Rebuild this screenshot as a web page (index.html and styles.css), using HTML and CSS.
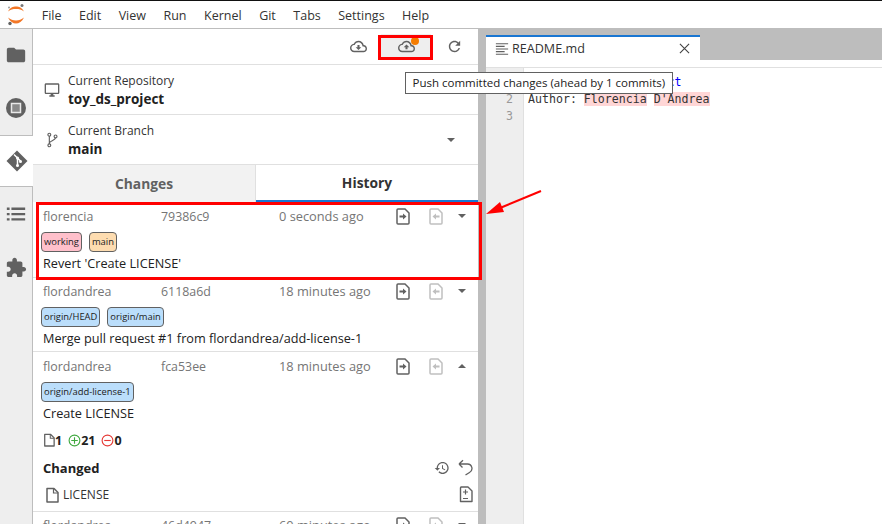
FILE: index.html
```html
<!DOCTYPE html>
<html lang="en">
<head>
<meta charset="utf-8">
<title>JupyterLab</title>
<link rel="stylesheet" href="styles.css">
</head>
<body>
<svg width="0" height="0" class="defs">
	<defs>
		<symbol id="i-file-in" viewBox="0 0 14 17"><path d="M2 1h7l4 4v10a1 1 0 0 1-1 1h-10a1 1 0 0 1-1-1v-13a1 1 0 0 1 1-1z" fill="none" stroke="currentColor" stroke-width="1.500"/><path d="M3.500 7.500h3.500v-2l3.500 3-3.500 3v-2h-3.500z" fill="currentColor"/></symbol>
		<symbol id="i-file-out" viewBox="0 0 14 17"><path d="M2 1h7l4 4v10a1 1 0 0 1-1 1h-10a1 1 0 0 1-1-1v-13a1 1 0 0 1 1-1z" fill="none" stroke="currentColor" stroke-width="1.500"/><path d="M10.500 7.500h-3.500v-2l-3.500 3 3.500 3v-2h3.500z" fill="currentColor"/></symbol>
		<symbol id="i-file-plain" viewBox="0 0 14 16"><path d="M2 1.500h7l4 4v9.500h-11z" fill="none" stroke="currentColor" stroke-width="1.500" stroke-linejoin="round"/><path d="M8.500 1.500v4.500h4.500" fill="none" stroke="currentColor" stroke-width="1.200"/></symbol>
		<symbol id="i-up" viewBox="0 0 24 24"><path fill="currentColor" d="M19.350 10.040C18.670 6.590 15.640 4 12 4 9.110 4 6.600 5.640 5.350 8.040 2.340 8.360 0 10.910 0 14c0 3.310 2.690 6 6 6h13c2.760 0 5-2.240 5-5 0-2.640-2.050-4.780-4.650-4.960zM19 18H6c-2.210 0-4-1.790-4-4 0-2.050 1.530-3.760 3.560-3.970l1.070-.11.500-.950C8.080 7.140 9.940 6 12 6c2.620 0 4.880 1.860 5.390 4.430l.300 1.500 1.530.110c1.560.100 2.780 1.410 2.780 2.960 0 1.650-1.350 3-3 3zM8 13h2.550v3h2.900v-3H16l-4-4z"/></symbol>
		<symbol id="i-down" viewBox="0 0 24 24"><path fill="currentColor" d="M19.350 10.040C18.670 6.590 15.640 4 12 4 9.110 4 6.600 5.640 5.350 8.040 2.340 8.360 0 10.910 0 14c0 3.310 2.690 6 6 6h13c2.760 0 5-2.240 5-5 0-2.640-2.050-4.780-4.650-4.960zM19 18H6c-2.210 0-4-1.790-4-4 0-2.050 1.530-3.760 3.560-3.970l1.070-.11.500-.950C8.080 7.140 9.940 6 12 6c2.620 0 4.880 1.860 5.390 4.430l.300 1.500 1.530.110c1.560.100 2.780 1.410 2.780 2.960 0 1.650-1.350 3-3 3zM16 13h-2.550v-3h-2.900v3H8l4 4z"/></symbol>
	</defs>
</svg>

<header class="menubar">
	<svg class="logo" viewBox="0 0 24 26" width="24" height="26">
		<path d="M3 9.500C5 5.500 8 4.500 11 4.500s6 1 8 5C16.500 7.500 14 7 11 7S5.500 7.500 3 9.500z" fill="#f37726"/>
		<path d="M3 15.500C5 19.500 8 21.500 11 21.500s6-2 8-6C16.500 17.500 14 18.500 11 18.500S5.500 17.500 3 15.500z" fill="#f37726"/>
		<circle cx="17" cy="3.500" r="1.500" fill="#767677"/>
		<circle cx="4" cy="5.500" r="1" fill="#9e9e9e"/>
		<circle cx="5" cy="21.500" r="1.700" fill="#616262"/>
	</svg>
	<nav class="menu">
		<span>File</span><span>Edit</span><span>View</span><span>Run</span><span>Kernel</span><span>Git</span><span>Tabs</span><span>Settings</span><span>Help</span>
	</nav>
</header>

<main class="shell">
	<aside class="sidebar">
		<div class="side-tab">
			<svg viewBox="0 0 24 24" width="22" height="22"><path fill="currentColor" d="M10 4H4c-1.100 0-1.990.900-1.990 2L2 18c0 1.100.900 2 2 2h16c1.100 0 2-.900 2-2V8c0-1.100-.900-2-2-2h-8l-2-2z"/></svg>
		</div>
		<div class="side-tab">
			<svg viewBox="0 0 24 24" width="24" height="24"><circle cx="12" cy="12" r="10" fill="currentColor"/><rect x="7.500" y="7.500" width="9" height="9" fill="#8a8a8a" stroke="#e8e8e8" stroke-width="1.500"/></svg>
		</div>
		<div class="side-tab side-tab-on">
			<svg viewBox="0 0 24 24" width="24" height="24"><path fill="currentColor" d="M12 1.500l10.500 10.500-10.500 10.500-10.500-10.500z"/><path d="M9 5.500l3.500 3.500m0 0v8m0-8l3.500 3.500" stroke="#fff" stroke-width="1.500" fill="none"/><circle cx="12.500" cy="9" r="1.500" fill="#fff"/><circle cx="12.500" cy="16.500" r="1.500" fill="#fff"/><circle cx="15.500" cy="12.500" r="1.500" fill="#fff"/></svg>
		</div>
		<div class="side-tab">
			<svg viewBox="0 0 24 24" width="22" height="22"><path fill="currentColor" d="M2 5h3v2.500h-3zM7 5h15v2.500h-15zM2 10.800h3v2.500h-3zM7 10.800h15v2.500h-15zM2 16.500h3v2.500h-3zM7 16.500h15v2.500h-15z"/></svg>
		</div>
		<div class="side-tab">
			<svg viewBox="0 -2 24 24" width="22" height="22"><path fill="currentColor" d="M20.500 11H19V7c0-1.100-.900-2-2-2h-4V3.500C13 2.120 11.880 1 10.500 1S8 2.120 8 3.500V5H4c-1.100 0-1.990.900-1.990 2v3.800H3.500c1.490 0 2.700 1.210 2.700 2.700s-1.210 2.700-2.700 2.700H2V20c0 1.100.900 2 2 2h3.800v-1.500c0-1.490 1.210-2.700 2.700-2.700 1.490 0 2.700 1.210 2.700 2.700V22H17c1.100 0 2-.900 2-2v-4h1.500c1.380 0 2.500-1.120 2.500-2.500S21.880 11 20.500 11z"/></svg>
		</div>
	</aside>

	<section class="git-panel">
		<div class="git-toolbar">
			<button class="tool"><svg width="17" height="17"><use href="#i-down"/></svg></button>
			<button class="tool tool-push"><svg width="17" height="17"><use href="#i-up"/></svg><span class="dot"></span></button>
			<button class="tool">
				<svg viewBox="0 0 24 24" width="17" height="17"><path fill="currentColor" d="M17.650 6.350C16.200 4.900 14.210 4 12 4c-4.420 0-7.990 3.580-7.990 8s3.570 8 7.990 8c3.730 0 6.840-2.550 7.730-6h-2.080c-.820 2.330-3.040 4-5.650 4-3.310 0-6-2.690-6-6s2.690-6 6-6c1.660 0 3.140.690 4.220 1.780L13 11h7V4l-2.350 2.350z"/></svg>
			</button>
		</div>

		<div class="git-head">
			<svg class="head-icon" viewBox="0 0 24 24" width="16" height="16"><path fill="currentColor" d="M21 2H3c-1.100 0-2 .900-2 2v12c0 1.100.900 2 2 2h7v2H8v2h8v-2h-2v-2h7c1.100 0 2-.900 2-2V4c0-1.100-.900-2-2-2zm0 14H3V4h18v12z"/></svg>
			<div>
				<div class="head-label">Current Repository</div>
				<div class="head-value">toy_ds_project</div>
			</div>
		</div>
		<div class="git-head">
			<svg class="head-icon" viewBox="0 0 16 18" width="16" height="16"><g fill="none" stroke="currentColor" stroke-width="1.300"><circle cx="5" cy="3" r="1.600"/><circle cx="5" cy="15" r="1.600"/><circle cx="12" cy="5" r="1.600"/><path d="M5 4.600v8.800M12 6.600c0 3-7 3.500-7 6"/></g></svg>
			<div>
				<div class="head-label">Current Branch</div>
				<div class="head-value">main</div>
			</div>
			<span class="caret caret-branch"></span>
		</div>

		<div class="git-tabs">
			<div class="git-tab">Changes</div>
			<div class="git-tab git-tab-on">History</div>
		</div>

		<div class="commit commit-first">
			<div class="commit-top">
				<span>florencia</span><span>79386c9</span><span class="commit-time">0 seconds ago</span>
				<div class="commit-acts">
					<svg width="14" height="17"><use href="#i-file-in"/></svg>
					<svg class="off" width="14" height="17"><use href="#i-file-out"/></svg>
					<span class="caret"></span>
				</div>
			</div>
			<div class="tags"><span class="tag tag-red">working</span><span class="tag tag-tan">main</span></div>
			<div class="subject">Revert 'Create LICENSE'</div>
		</div>

		<div class="commit">
			<div class="commit-top">
				<span>flordandrea</span><span>6118a6d</span><span class="commit-time">18 minutes ago</span>
				<div class="commit-acts">
					<svg width="14" height="17"><use href="#i-file-in"/></svg>
					<svg class="off" width="14" height="17"><use href="#i-file-out"/></svg>
					<span class="caret"></span>
				</div>
			</div>
			<div class="tags"><span class="tag tag-blue">origin/HEAD</span><span class="tag tag-blue">origin/main</span></div>
			<div class="subject">Merge pull request #1 from flordandrea/add-license-1</div>
		</div>

		<div class="commit commit-open">
			<div class="commit-top">
				<span>flordandrea</span><span>fca53ee</span><span class="commit-time">18 minutes ago</span>
				<div class="commit-acts">
					<svg width="14" height="17"><use href="#i-file-in"/></svg>
					<svg class="off" width="14" height="17"><use href="#i-file-out"/></svg>
					<span class="caret caret-up"></span>
				</div>
			</div>
			<div class="tags"><span class="tag tag-blue">origin/add-license-1</span></div>
			<div class="subject">Create LICENSE</div>
			<div class="stats">
				<svg class="stat-file" width="12" height="14"><use href="#i-file-plain"/></svg><b>1</b>
				<svg class="stat-icon" viewBox="0 0 14 14" width="13" height="13"><circle cx="7" cy="7" r="5.800" fill="none" stroke="#3fa83f" stroke-width="1.200"/><path d="M3.500 7h7M7 3.500v7" stroke="#3fa83f" stroke-width="1.200"/></svg><b>21</b>
				<svg class="stat-icon" viewBox="0 0 14 14" width="13" height="13"><circle cx="7" cy="7" r="5.800" fill="none" stroke="#e53935" stroke-width="1.200"/><path d="M3.500 7h7" stroke="#e53935" stroke-width="1.200"/></svg><b>0</b>
			</div>
			<div class="changed-head">
				<b>Changed</b>
				<div class="changed-acts">
					<svg viewBox="0 0 24 24" width="16" height="16"><path fill="currentColor" d="M13 3c-4.970 0-9 4.030-9 9H1l3.890 3.890.070.140L9 12H6c0-3.870 3.130-7 7-7s7 3.130 7 7-3.130 7-7 7c-1.930 0-3.680-.790-4.940-2.060l-1.420 1.420C8.270 19.990 10.510 21 13 21c4.970 0 9-4.030 9-9s-4.030-9-9-9zm-1 5v5l4.280 2.540.720-1.210-3.500-2.080V8H12z"/></svg>
					<svg viewBox="0 0 15 17" width="15" height="17"><path d="M1 5h8.500a4.500 4.500 0 0 1 2 8.500L7.500 16M1 5l4-3.800M1 5l3.500 3.500" fill="none" stroke="currentColor" stroke-width="1.300"/></svg>
				</div>
			</div>
			<div class="file-row">
				<svg width="14" height="16"><use href="#i-file-plain"/></svg>
				<span>LICENSE</span>
				<svg class="file-diff" viewBox="0 0 14 17" width="14" height="17"><path d="M2 1h7l4 4v10.500h-11.500v-13.500a1 1 0 0 1 1-1z" fill="none" stroke="currentColor" stroke-width="1.400" stroke-linejoin="round"/><path d="M6.500 3.500v5M4 6h5M4 12.500h5" stroke="currentColor" stroke-width="1.200"/></svg>
			</div>
		</div>

		<div class="commit">
			<div class="commit-top">
				<span>flordandrea</span><span>46d4947</span><span class="commit-time">60 minutes ago</span>
				<div class="commit-acts">
					<svg width="14" height="17"><use href="#i-file-in"/></svg>
					<svg class="off" width="14" height="17"><use href="#i-file-out"/></svg>
					<span class="caret"></span>
				</div>
			</div>
		</div>
	</section>

	<div class="splitter"></div>

	<section class="editor">
		<div class="editor-tabs">
			<div class="editor-tab">
				<svg viewBox="0 0 16 16" width="14" height="14"><path d="M1 2h14M1 5h10M1 8h14M1 11h10M1 14h14" stroke="#616161" stroke-width="1.200"/></svg>
				<span>README.md</span>
				<svg class="tab-close" viewBox="0 0 12 12" width="11" height="11"><path d="M1 1l10 10M11 1l-10 10" stroke="#424242" stroke-width="1.200"/></svg>
			</div>
		</div>
		<div class="editor-bar"></div>
		<div class="code">
			<div class="gutter"><div>1</div><div>2</div><div>3</div></div>
			<div class="lines">
				<div class="line line-head">                    ct</div>
				<div class="line">Author: <span class="err">Florencia</span> <span class="err">D'Andrea</span></div>
			</div>
		</div>
	</section>
</main>

<div class="tooltip">Push committed changes (ahead by 1 commits)</div>

<div class="mark mark-push"></div>
<div class="mark mark-commit"></div>
<svg class="arrow" viewBox="0 0 60 32" width="60" height="32"><path d="M59 2L18 19" stroke="#f00" stroke-width="2"/><path d="M4 25L18 13l4 10z" fill="#f00"/></svg>
</body>
</html>
```
FILE: styles.css
```css
* {
	box-sizing: border-box;
}
html, body {
	margin: 0;
	padding: 0;
}
body {
	width: 882px;
	height: 524px;
	overflow: hidden;
	position: relative;
	display: flex;
	flex-direction: column;
	font-family: "Open Sans", "Noto Sans", sans-serif;
	font-size: 12px;
	color: #212121;
	background: #fff;
}
.defs {
	position: absolute;
}
svg {
	display: block;
	flex: none;
}

.menubar {
	height: 29px;
	flex: none;
	display: flex;
	align-items: center;
	padding-left: 5px;
	border-top: 1px solid #111;
	border-bottom: 1px solid #bdbdbd;
}
.menu {
	display: flex;
	margin-left: 4px;
	padding-top: 1px;
	font-size: 12.500px;
	color: #333;
}
.menu span {
	padding: 0 8.800px 0 8.700px;
}

.shell {
	flex: 1;
	display: flex;
	min-height: 0;
}
.sidebar {
	width: 33px;
	flex: none;
	background: #eee;
	border-right: 1px solid #bdbdbd;
	color: #616161;
}
.side-tab {
	height: 52.750px;
	display: flex;
	align-items: center;
	justify-content: center;
}
.side-tab-on {
	background: #fff;
	width: 33px;
	border-top: 1px solid #bdbdbd;
	border-bottom: 1px solid #bdbdbd;
}

.git-panel {
	width: 445px;
	flex: none;
	overflow: hidden;
}
.git-toolbar {
	height: 36px;
	display: flex;
	justify-content: flex-end;
	align-items: center;
	gap: 10px;
	padding: 0 11px 1px 0;
	border-bottom: 1px solid #e0e0e0;
}
.tool {
	border: 0;
	padding: 0;
	background: none;
	color: #616161;
	height: 24px;
	width: 26px;
	display: flex;
	align-items: center;
	justify-content: center;
	position: relative;
}
.tool-push {
	width: 50px;
	background: #eee;
}
.dot {
	position: absolute;
	left: 30px;
	top: 2.500px;
	width: 8px;
	height: 8px;
	border-radius: 50%;
	background: #f57c00;
}

.git-head {
	height: 50px;
	display: flex;
	align-items: center;
	border-bottom: 1px solid #e0e0e0;
	padding-left: 11px;
	gap: 8px;
}
.head-icon {
	color: #616161;
}
.head-label {
	line-height: 18px;
	color: #333;
}
.head-value {
	font-weight: 700;
	font-size: 13.500px;
	line-height: 18px;
}
.caret {
	width: 0;
	height: 0;
	border-left: 4px solid transparent;
	border-right: 4px solid transparent;
	border-top: 4px solid #616161;
}
.caret-up {
	border-top: 0;
	border-bottom: 4px solid #616161;
}
.caret-branch {
	margin-left: auto;
	margin-right: 23px;
}

.git-tabs {
	height: 37px;
	margin-bottom: 1px;
	display: flex;
}
.git-tab {
	flex: 1;
	display: flex;
	align-items: center;
	justify-content: center;
	padding-bottom: 1px;
	font-size: 13.800px;
	font-weight: 700;
	color: #616161;
	background: #f2f2f2;
	border-right: 1px solid #e0e0e0;
}
.git-tab-on {
	color: #333;
	background: #fff;
	border-right: 0;
	border-bottom: 2px solid #1976d2;
	padding-bottom: 0;
}

.commit {
	padding: 2px 0 0 10px;
	border-bottom: 1px solid #e0e0e0;
}
.commit-first {
	padding-bottom: 1px;
}
.commit-open {
	padding-top: 3px;
	padding-bottom: 3px;
}
.commit-top {
	display: grid;
	grid-template-columns: 118px 118px 1fr 82px;
	height: 22px;
	align-items: center;
	color: #757575;
	font-size: 12.400px;
}
.commit-time {
	font-size: 12.800px;
}
.commit-acts {
	display: flex;
	align-items: center;
	color: #616161;
	gap: 19px;
}
.commit-acts .off {
	opacity: .4;
}
.commit-acts .caret {
	margin-left: -4px;
}
.tags {
	display: flex;
	gap: 7px;
	margin: 5px 0 0 -2px;
}
.tag {
	height: 20px;
	border: 1px solid #616161;
	border-radius: 4px;
	padding: 0 2px;
	font-size: 9.400px;
	line-height: 18px;
	color: #212121;
}
.tag-red {
	background: #ffc0cb;
}
.tag-tan {
	background: #fddcb0;
}
.tag-blue {
	background: #bbdefb;
}
.subject {
	font-size: 12.700px;
	line-height: 22px;
	height: 24px;
	color: #212121;
}
.stats {
	display: flex;
	align-items: center;
	height: 28px;
	font-size: 12.500px;
	color: #212121;
}
.stat-file {
	color: #616161;
}
.stat-icon {
	margin-left: 6px;
}
.changed-head {
	display: flex;
	align-items: center;
	justify-content: space-between;
	height: 27px;
	font-size: 13px;
	padding-right: 5px;
}
.changed-acts {
	display: flex;
	align-items: center;
	gap: 8px;
	color: #616161;
}
.file-row {
	display: flex;
	align-items: center;
	height: 27px;
	gap: 4px;
	padding: 0 5px 0 2px;
	color: #333;
}
.file-row svg {
	color: #616161;
}
.file-diff {
	margin-left: auto;
}

.splitter {
	width: 8px;
	flex: none;
	background: #bdbdbd;
}
.editor {
	flex: 1;
	display: flex;
	flex-direction: column;
}
.editor-tabs {
	height: 31px;
	padding-top: 6px;
	background: #bdbdbd;
	flex: none;
}
.editor-tab {
	width: 214px;
	height: 25px;
	background: #fff;
	border-top: 2px solid #1976d2;
	display: flex;
	align-items: center;
	padding: 0 10px 0 9px;
	gap: 3px;
	font-size: 12.600px;
	color: #333;
}
.tab-close {
	margin-left: auto;
}
.editor-bar {
	height: 8px;
	flex: none;
	border-bottom: 1px solid #e0e0e0;
}
.code {
	flex: 1;
	display: flex;
	font-family: "DejaVu Sans Mono", monospace;
	font-size: 11.600px;
	line-height: 17px;
}
.gutter {
	width: 38px;
	background: #eee;
	border-right: 1px solid #e0e0e0;
	padding: 6px 10px 0 0;
	text-align: right;
	color: #999;
}
.lines {
	padding: 6px 0 0 4px;
	color: #333;
}
.line {
	white-space: pre;
}
.line-head {
	color: #00f;
}
.err {
	background: #ffd6d6;
}

.tooltip {
	position: absolute;
	left: 405px;
	top: 72px;
	height: 22px;
	padding: 0 6.500px;
	font-size: 11.500px;
	line-height: 20px;
	background: #fff;
	border: 1px solid #616161;
	color: #212121;
	white-space: nowrap;
}
.mark {
	position: absolute;
	border: 3px solid #f00;
}
.mark-push {
	left: 378px;
	top: 35px;
	width: 55px;
	height: 25px;
}
.mark-commit {
	left: 36px;
	top: 202px;
	width: 446px;
	height: 78px;
}
.arrow {
	position: absolute;
	left: 482px;
	top: 189px;
}
```
